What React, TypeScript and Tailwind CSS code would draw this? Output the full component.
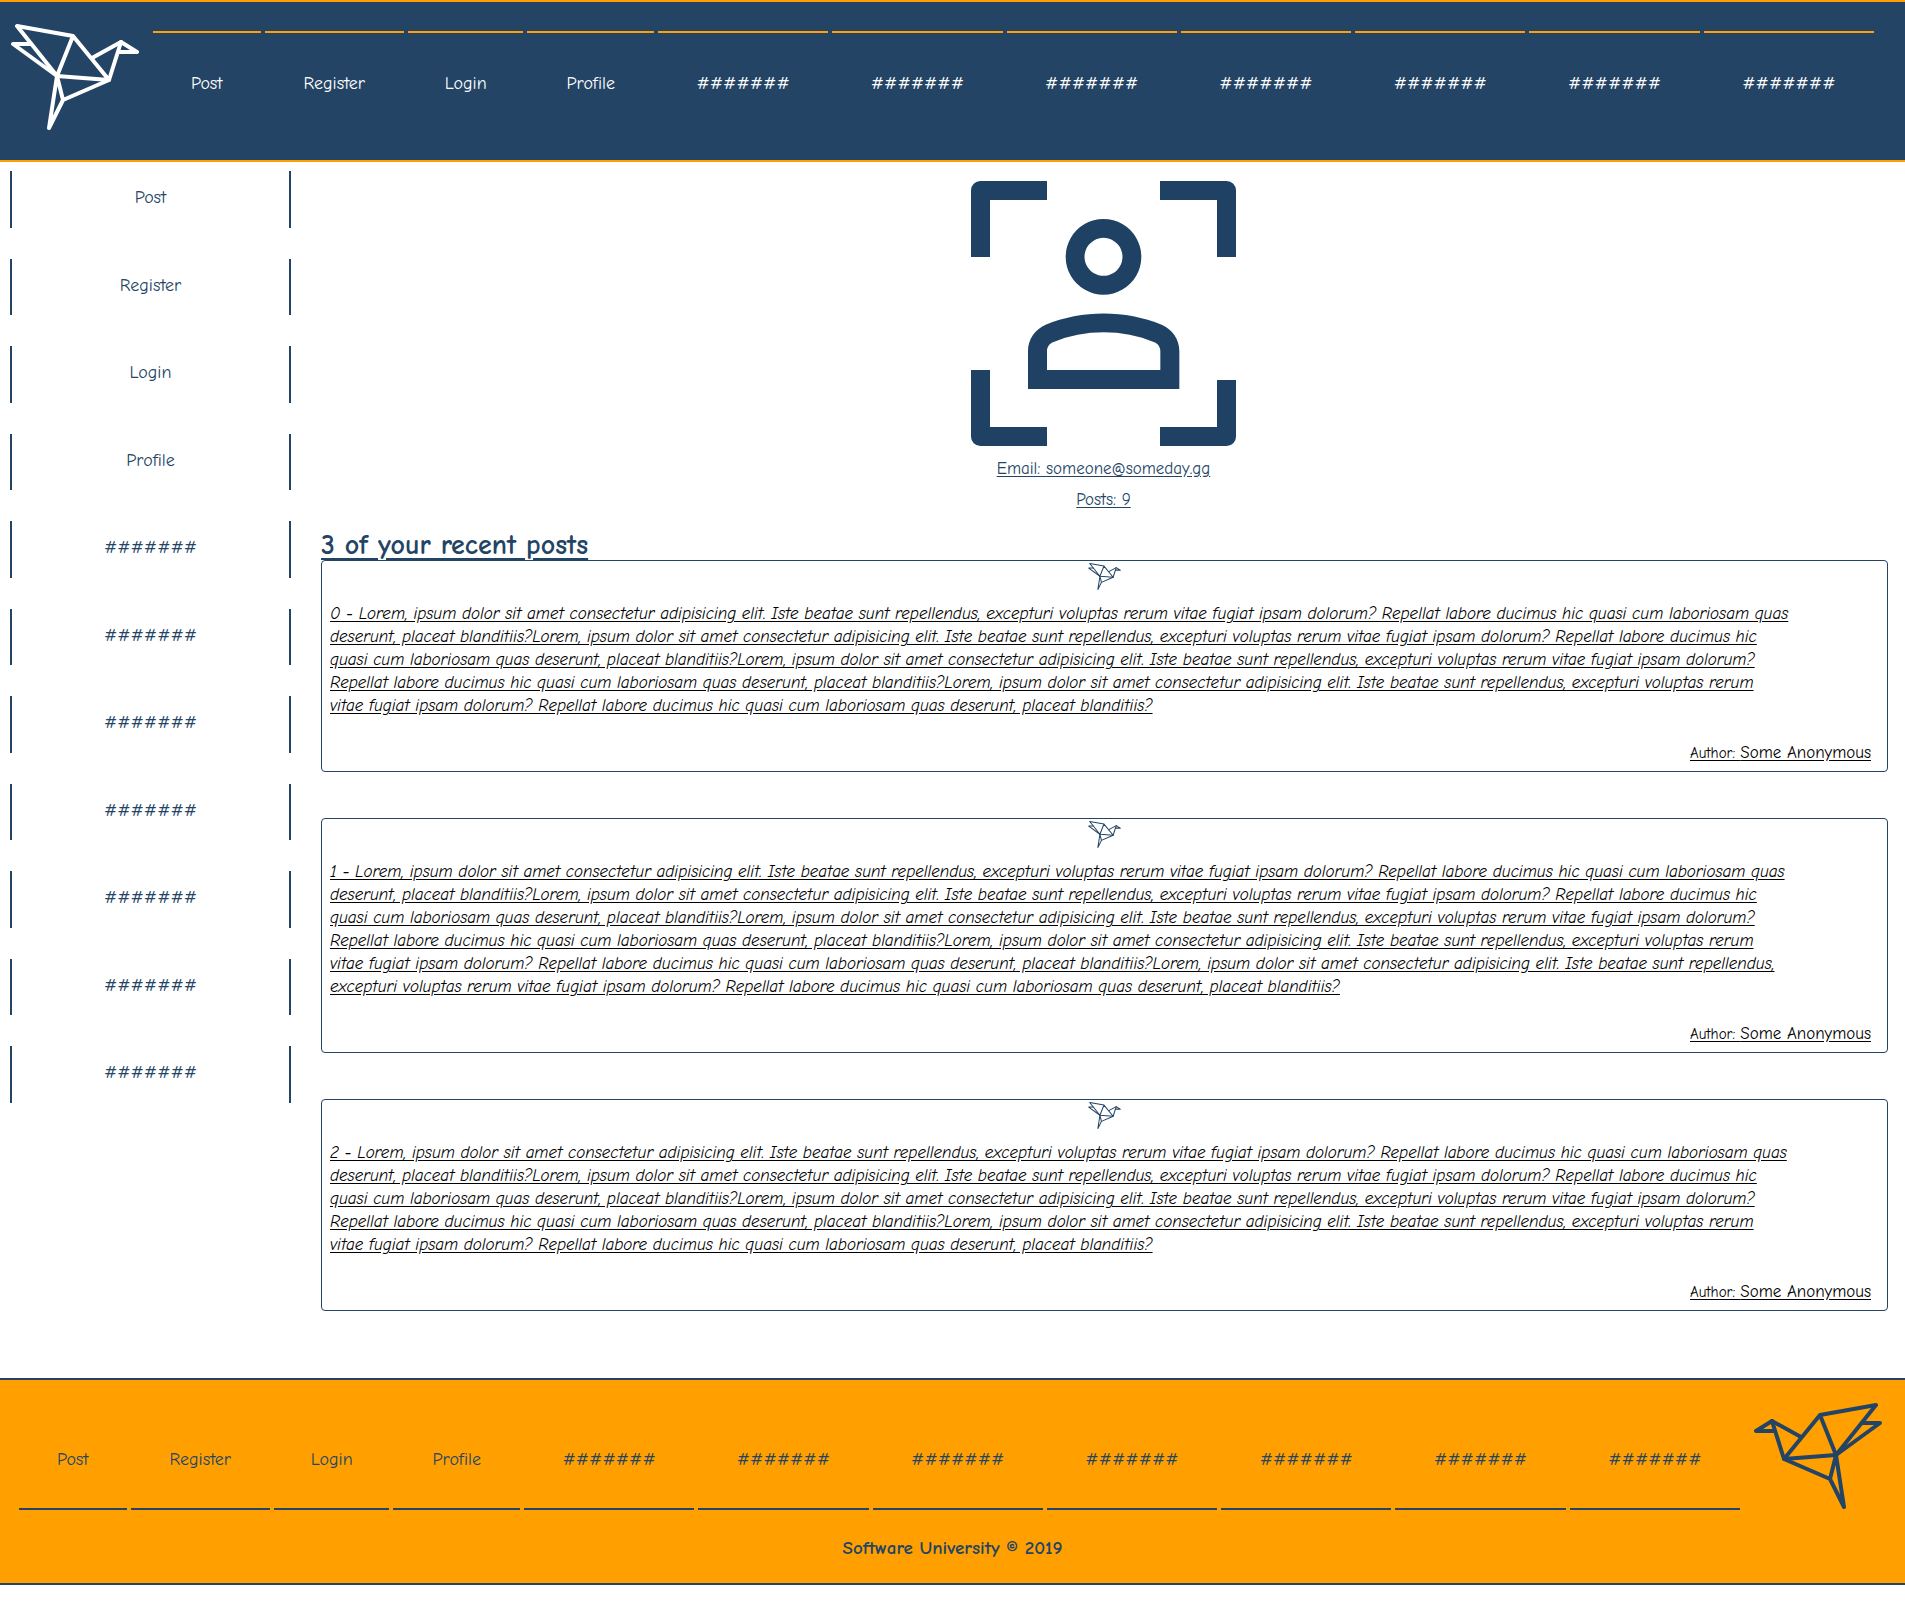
const links = [
  { label: "Post", size: "basis-[108px]" },
  { label: "Register", size: "basis-[140px]" },
  { label: "Login", size: "basis-[116px]" },
  { label: "Profile", size: "basis-[127px]" },
  { label: "#######", size: "basis-[171px]" },
  { label: "#######", size: "basis-[171px]" },
  { label: "#######", size: "basis-[171px]" },
  { label: "#######", size: "basis-[171px]" },
  { label: "#######", size: "basis-[171px]" },
  { label: "#######", size: "basis-[171px]" },
  { label: "#######", size: "basis-[171px]" },
];

const lorem =
  "Lorem, ipsum dolor sit amet consectetur adipisicing elit. Iste beatae sunt repellendus, excepturi voluptas rerum vitae fugiat ipsam dolorum? Repellat labore ducimus hic quasi cum laboriosam quas deserunt, placeat blanditiis?";

const posts = [
  { id: 0, repeat: 4 },
  { id: 1, repeat: 5 },
  { id: 2, repeat: 4 },
];

function Bird({ className, stroke }: { className: string; stroke: number }) {
  return (
    <svg
      viewBox="0 0 128 106"
      className={className}
      fill="none"
      stroke="currentColor"
      strokeWidth={stroke}
      strokeLinecap="round"
      strokeLinejoin="round"
      aria-hidden="true"
    >
      <path d="M46 52 6 2 62 12 98 56 46 52 62 12" />
      <path d="M20 20H2L46 52" />
      <path d="M81 34 110 18 126 28H108" />
      <path d="M110 18 98 56 52 76 46 52 38 104 52 76" />
    </svg>
  );
}

function Avatar() {
  return (
    <svg viewBox="0 0 795 795" className="size-[265px] text-[#1e4164]" fill="currentColor" role="img" aria-label="Profile picture">
      <path d="M0 228V28A28 28 0 0 1 28 0H228V57H57V228Z" />
      <path d="M567 0H767A28 28 0 0 1 795 28V228H738V57H567Z" />
      <path d="M0 567H57V738H228V795H28A28 28 0 0 1 0 767Z" />
      <path d="M738 597H795V767A28 28 0 0 1 767 795H567V738H738Z" />
      <path fillRule="evenodd" d="M397.500 114a113.500 113.500 0 1 0 .01 0ZM397.500 170.500a57 57 0 1 1-.01 0Z" />
      <path
        fillRule="evenodd"
        d="M171 624V510C171 475 192 445 224 431C333 386 463 386 572 431C604 445 625 475 625 510V624ZM228 567H568V510C568 499 561 488 550 484C455 444 341 444 246 484C235 488 228 499 228 510Z"
      />
    </svg>
  );
}

export default function App() {
  return (
    <div className="bg-white font-['Comic_Sans_MS','Comic_Neue','DejaVu_Sans_Condensed',sans-serif] text-[18px] leading-[23px] font-medium text-[#234465]">
      <header className="flex h-[162px] items-start border-y-2 border-[#ffa000] bg-[#234465] pt-[22px] pr-[31px] pl-[11px] text-white">
        <a href="#" aria-label="Home" className="shrink-0">
          <Bird className="h-[106px] w-[128px]" stroke={4} />
        </a>
        <nav aria-label="Main" className="ml-[14px] grow pt-[7px]">
          <ul className="flex gap-1">
            {links.map((l, i) => (
              <li key={i} className={`${l.size} border-t-2 border-[#ffa000] pt-[39px] text-center`}>
                <a href="#">{l.label}</a>
              </li>
            ))}
          </ul>
        </nav>
      </header>

      <div className="flex items-start pt-[9px]">
        <aside className="ml-[10px] w-[281px] shrink-0">
          <ul className="grid h-[932px] auto-rows-fr gap-y-[31px]">
            {links.map((l, i) => (
              <li key={i} className="border-x-2 border-[#234465] pt-[15px] text-center">
                <a href="#">{l.label}</a>
              </li>
            ))}
          </ul>
        </aside>

        <main className="mr-[17px] ml-[30px] grow pt-[10px]">
          <section className="flex flex-col items-center pr-[2px] text-[17px] underline underline-offset-2">
            <Avatar />
            <p className="mt-[11px]">Email: someone@someday.gg</p>
            <p className="mt-2">Posts: 9</p>
          </section>
          <h1 className="mt-[20px] text-[28px] leading-[29px] font-bold underline underline-offset-4">3 of your recent posts</h1>
          <div className="flex flex-col gap-[46px] text-black">
            {posts.map((p) => (
              <article key={p.id} className="rounded-[4px] border border-[#234465] px-[8px] pb-[6px]">
                <Bird className="mx-auto mt-[2px] h-[27px] w-[33px] text-[#234465]" stroke={4} />
                <p className="mt-[12px] pr-[88px] text-[17px] italic underline underline-offset-2">
                  {`${p.id} - ${lorem.repeat(p.repeat)}`}
                </p>
                <p className="mt-[24px] pr-2 text-right underline underline-offset-2">
                  <span className="text-[15px]">Author: </span>
                  <span className="text-[17px]">Some Anonymous</span>
                </p>
              </article>
            ))}
          </div>
        </main>
      </div>

      <footer className="mt-[67px] h-[207px] border-y-2 border-[#234465] bg-[#ffa000] pt-[23px]">
        <div className="flex items-start pr-[23px] pl-[19px]">
          <nav aria-label="Footer" className="mr-[14px] grow pt-[45px]">
            <ul className="flex gap-1">
              {links.map((l, i) => (
                <li key={i} className={`${l.size} border-b-2 border-[#234465] pb-[37px] text-center`}>
                  <a href="#">{l.label}</a>
                </li>
              ))}
            </ul>
          </nav>
          <a href="#" aria-label="Back to top" className="shrink-0">
            <Bird className="h-[106px] w-[128px] -scale-x-100" stroke={4} />
          </a>
        </div>
        <p className="mt-[27px] text-center text-[19px] font-bold">Software University © 2019</p>
      </footer>
    </div>
  );
}
